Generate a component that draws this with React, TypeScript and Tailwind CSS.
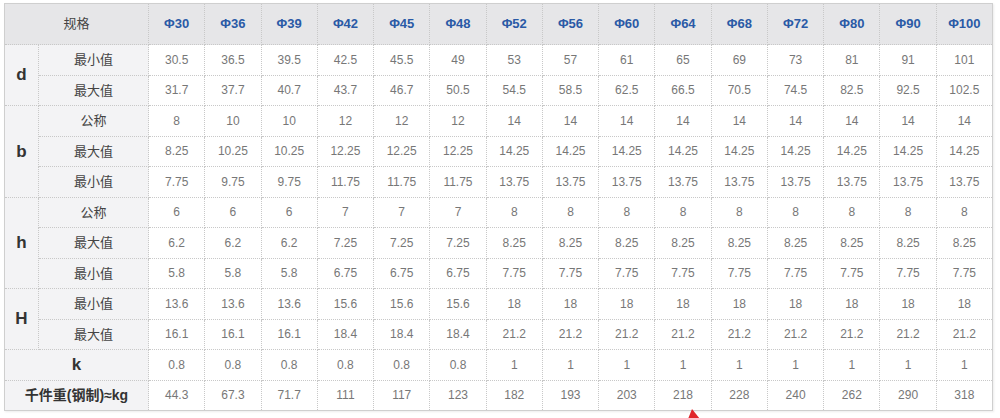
const sizes = ["Φ30", "Φ36", "Φ39", "Φ42", "Φ45", "Φ48", "Φ52", "Φ56", "Φ60", "Φ64", "Φ68", "Φ72", "Φ80", "Φ90", "Φ100"];

type Group = { key: string; rows: { label: string; values: string[] }[] };

const groups: Group[] = [
  {
    key: "d",
    rows: [
      { label: "最小值", values: ["30.5", "36.5", "39.5", "42.5", "45.5", "49", "53", "57", "61", "65", "69", "73", "81", "91", "101"] },
      { label: "最大值", values: ["31.7", "37.7", "40.7", "43.7", "46.7", "50.5", "54.5", "58.5", "62.5", "66.5", "70.5", "74.5", "82.5", "92.5", "102.5"] },
    ],
  },
  {
    key: "b",
    rows: [
      { label: "公称", values: ["8", "10", "10", "12", "12", "12", "14", "14", "14", "14", "14", "14", "14", "14", "14"] },
      { label: "最大值", values: ["8.25", "10.25", "10.25", "12.25", "12.25", "12.25", "14.25", "14.25", "14.25", "14.25", "14.25", "14.25", "14.25", "14.25", "14.25"] },
      { label: "最小值", values: ["7.75", "9.75", "9.75", "11.75", "11.75", "11.75", "13.75", "13.75", "13.75", "13.75", "13.75", "13.75", "13.75", "13.75", "13.75"] },
    ],
  },
  {
    key: "h",
    rows: [
      { label: "公称", values: ["6", "6", "6", "7", "7", "7", "8", "8", "8", "8", "8", "8", "8", "8", "8"] },
      { label: "最大值", values: ["6.2", "6.2", "6.2", "7.25", "7.25", "7.25", "8.25", "8.25", "8.25", "8.25", "8.25", "8.25", "8.25", "8.25", "8.25"] },
      { label: "最小值", values: ["5.8", "5.8", "5.8", "6.75", "6.75", "6.75", "7.75", "7.75", "7.75", "7.75", "7.75", "7.75", "7.75", "7.75", "7.75"] },
    ],
  },
  {
    key: "H",
    rows: [
      { label: "最小值", values: ["13.6", "13.6", "13.6", "15.6", "15.6", "15.6", "18", "18", "18", "18", "18", "18", "18", "18", "18"] },
      { label: "最大值", values: ["16.1", "16.1", "16.1", "18.4", "18.4", "18.4", "21.2", "21.2", "21.2", "21.2", "21.2", "21.2", "21.2", "21.2", "21.2"] },
    ],
  },
];

const kValues = ["0.8", "0.8", "0.8", "0.8", "0.8", "0.8", "1", "1", "1", "1", "1", "1", "1", "1", "1"];
const weights = ["44.3", "67.3", "71.7", "111", "117", "123", "182", "193", "203", "218", "228", "240", "262", "290", "318"];

const cell = "border border-dotted border-[#c8c8c8] text-center";
const num = `${cell} bg-white text-[12px] text-[#777]`;
const label = `${cell} bg-[#f3f3f5] text-[13px] text-[#444]`;
const key = `${cell} bg-[#f3f3f5] text-[17px] font-bold text-[#333]`;

export default function App() {
  return (
    <div className="relative w-[1000px] h-[418px] bg-white pl-[4px] pt-[3px] font-['Liberation_Sans','Noto_Sans_CJK_SC',sans-serif]">
      <table className="w-[989px] table-fixed border-collapse border border-solid border-[#cfcfcf] shadow-[1px_1px_2px_rgba(0,0,0,0.08)]">
        <colgroup>
          <col className="w-[34px]" />
          <col className="w-[110px]" />
          {sizes.map((s) => (
            <col key={s} />
          ))}
        </colgroup>
        <thead>
          <tr className="h-[41px] bg-[#e6e6e8]">
            <th colSpan={2} className={`${cell} text-[13px] font-normal text-[#444]`}>
              规格
            </th>
            {sizes.map((s) => (
              <th key={s} className={`${cell} text-[13px] font-bold text-[#2a5aa6]`}>
                {s}
              </th>
            ))}
          </tr>
        </thead>
        <tbody>
          {groups.map((g) =>
            g.rows.map((r, i) => (
              <tr key={g.key + i} className="h-[30.5px]">
                {i === 0 && (
                  <td rowSpan={g.rows.length} className={key}>
                    {g.key}
                  </td>
                )}
                <td className={label}>{r.label}</td>
                {r.values.map((v, j) => (
                  <td key={j} className={num}>
                    {v}
                  </td>
                ))}
              </tr>
            ))
          )}
          <tr className="h-[30.5px]">
            <td colSpan={2} className={key}>
              k
            </td>
            {kValues.map((v, j) => (
              <td key={j} className={num}>
                {v}
              </td>
            ))}
          </tr>
          <tr className="h-[30.5px]">
            <td colSpan={2} className={`${cell} bg-[#f3f3f5] text-[14px] font-bold text-[#333]`}>
              千件重(钢制)≈kg
            </td>
            {weights.map((v, j) => (
              <td key={j} className={num}>
                {v}
              </td>
            ))}
          </tr>
        </tbody>
      </table>
      <svg className="absolute left-[688px] top-[409px]" width="14" height="10" viewBox="0 0 14 10">
        <polygon points="4,0 12,10 0,10" fill="#e0262b" />
      </svg>
    </div>
  );
}
